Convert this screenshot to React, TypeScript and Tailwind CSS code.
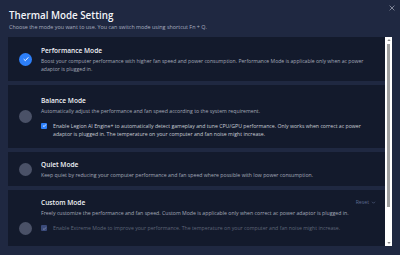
import React from "react";

const F = { fontFamily: '"Open Sans", "Noto Sans", sans-serif' };

function Check({ dim }: { dim?: boolean }) {
  return (
    <div className={`w-[6px] h-[6px] mt-[1px] shrink-0 rounded-[1px] flex items-center justify-center ${dim ? "bg-[#3a4a7a]" : "bg-[#2d7ff9]"}`}>
      <svg viewBox="0 0 10 10" className="w-[5px] h-[5px]">
        <path d="M2 5.2 L4.2 7.3 L8 2.8" stroke={dim ? "#8891a8" : "white"} strokeWidth="1.6" fill="none" />
      </svg>
    </div>
  );
}

function Radio({ on }: { on?: boolean }) {
  if (on)
    return (
      <div className="w-[13px] h-[13px] rounded-full bg-[#2d7ff9] flex items-center justify-center shrink-0">
        <svg viewBox="0 0 12 12" className="w-[8px] h-[8px]">
          <path d="M2.5 6.2 L5 8.5 L9.5 3.5" stroke="white" strokeWidth="1.4" fill="none" />
        </svg>
      </div>
    );
  return <div className="w-[13px] h-[13px] rounded-full bg-[#4a5167] shrink-0" />;
}

export default function App() {
  return (
    <div className="w-[400px] h-[255px] bg-[#1f2841] relative overflow-hidden text-white" style={F}>
      <div className="absolute right-[5px] top-[5px]">
        <svg viewBox="0 0 10 10" className="w-[6px] h-[6px]">
          <path d="M1 1 L9 9 M9 1 L1 9" stroke="#9aa0b0" strokeWidth="1.3" />
        </svg>
      </div>
      <div className="pl-[9px] pt-[10px]">
        <div className="text-[9.8px] leading-[12px] font-semibold text-[#f2f4f8]">Thermal Mode Setting</div>
        <div className="text-[5.4px] leading-[8px] mt-[1px] text-[#aab0c0]">
          Choose the mode you want to use. You can switch mode using shortcut Fn + Q.
        </div>
      </div>
      <div className="flex ml-[8px] mt-[6px] h-[209px] w-[384px]">
        <div className="flex-1 flex flex-col gap-[4px] overflow-hidden">
          {/* Performance */}
          <div className="bg-[#131a2c] h-[44px] flex items-center pl-[11px] pr-[1px] shrink-0">
            <Radio on />
            <div className="ml-[9px]">
              <div className="text-[6.6px] leading-[9px] font-semibold text-[#f0f2f6]">Performance Mode</div>
              <div className="text-[5.1px] leading-[8px] mt-[2px] text-[#a3a9b8]">
                Boost your computer performance with higher fan speed and power consumption. Performance Mode is applicable only when ac power
                <br />
                adaptor is plugged in.
              </div>
            </div>
          </div>
          {/* Balance */}
          <div className="bg-[#131a2c] h-[63px] flex items-center pl-[11px] pr-[6px] shrink-0">
            <Radio />
            <div className="ml-[9px]">
              <div className="text-[6.6px] leading-[9px] font-semibold text-[#f0f2f6]">Balance Mode</div>
              <div className="text-[5.2px] leading-[8px] mt-[2px] text-[#a3a9b8]">
                Automatically adjust the performance and fan speed according to the system requirement.
              </div>
              <div className="flex gap-[6px] mt-[7px] pr-[4px]">
                <Check />
                <div className="text-[5.2px] leading-[8px] text-[#c9cdd6]">
                  Enable Legion AI Engine+ to automatically detect gameplay and tune CPU/GPU performance. Only works when correct ac power adaptor is plugged in. The temperature on your computer and fan noise might increase.
                </div>
              </div>
            </div>
          </div>
          {/* Quiet */}
          <div className="bg-[#131a2c] h-[34px] flex items-center pl-[11px] pr-[6px] shrink-0">
            <Radio />
            <div className="ml-[9px]">
              <div className="text-[6.6px] leading-[9px] font-semibold text-[#f0f2f6]">Quiet Mode</div>
              <div className="text-[5.2px] leading-[8px] mt-[2px] text-[#a3a9b8]">
                Keep quiet by reducing your computer performance and fan speed where possible with low power consumption.
              </div>
            </div>
          </div>
          {/* Custom */}
          <div className="bg-[#131a2c] h-[56px] flex pl-[11px] pr-[6px] shrink-0 relative">
            <div className="absolute right-[9px] top-[9px] flex items-center gap-[2px] text-[5.2px] text-[#5d6a90]">
              Reset
              <svg viewBox="0 0 10 10" className="w-[5px] h-[5px]">
                <path d="M2 3.5 L5 6.5 L8 3.5" stroke="#5d6a90" strokeWidth="1.2" fill="none" />
              </svg>
            </div>
            <div className="mt-[32px]">
              <Radio />
            </div>
            <div className="ml-[9px] pt-[8px]">
              <div className="text-[6.6px] leading-[9px] font-semibold text-[#f0f2f6]">Custom Mode</div>
              <div className="text-[5.2px] leading-[8px] mt-[2px] text-[#a3a9b8]">
                Freely customize the performance and fan speed. Custom Mode is applicable only when correct ac power adaptor is plugged in.
              </div>
              <div className="flex gap-[6px] mt-[7px]">
                <Check dim />
                <div className="text-[5.2px] leading-[8px] text-[#5f6678]">
                  Enable Extreme Mode to improve your performance. The temperature on your computer and fan noise might increase.
                </div>
              </div>
            </div>
          </div>
        </div>
        {/* scrollbar */}
        <div className="w-[7px] h-[209px] bg-white flex flex-col items-center shrink-0">
          <svg viewBox="0 0 6 6" className="w-[4px] h-[4px] mt-[1px]">
            <path d="M0.5 4.5 L3 1.5 L5.5 4.5 Z" fill="#888" />
          </svg>
          <div className="w-[3px] h-[163px] bg-[#a0a0a0] mt-[2px]" />
          <div className="flex-1" />
          <svg viewBox="0 0 6 6" className="w-[4px] h-[4px] mb-[1px]">
            <path d="M0.5 1.5 L3 4.5 L5.5 1.5 Z" fill="#888" />
          </svg>
        </div>
      </div>
    </div>
  );
}
